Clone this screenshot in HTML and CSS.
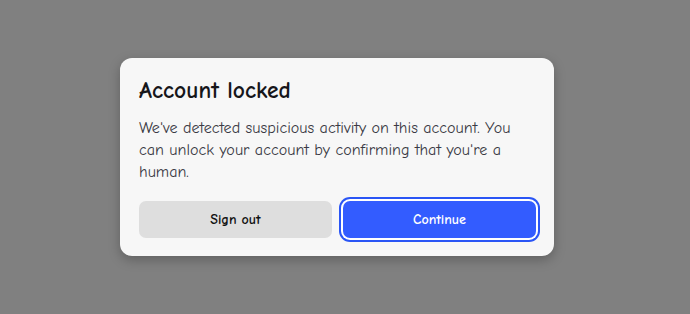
FILE: index.html
```html
<!DOCTYPE html>
<html lang="en">
<head>
<meta charset="utf-8">
<link rel="stylesheet" href="styles.css">
<title>Account locked</title>
</head>
<body>
<div class="backdrop">
  <div class="dialog" role="dialog" aria-labelledby="t">
    <h2 class="title" id="t">Account locked</h2>
    <p class="desc">We've detected suspicious activity on this account. You can unlock your account by confirming that you're a human.</p>
    <div class="actions">
      <button class="btn btn-secondary">Sign out</button>
      <button class="btn btn-primary">Continue</button>
    </div>
  </div>
</div>
</body>
</html>
```
FILE: styles.css
```css
html, body {
  margin: 0;
  height: 100%;
}
body {
  background: #808080;
  font-family: "Comic Sans MS", "Comic Neue", cursive;
}
.backdrop {
  height: 100%;
  display: flex;
  align-items: center;
  justify-content: center;
  padding-right: 16px;
  box-sizing: border-box;
}
.dialog {
  width: 434px;
  box-sizing: border-box;
  background: #f7f7f7;
  border-radius: 12px;
  padding: 19px 18px 18px 19px;
  box-shadow: 0 4px 12px rgba(0,0,0,0.25);
}
.title {
  margin: 0;
  font-size: 23.5px;
  line-height: 28px;
  font-weight: 700;
  color: #16161a;
}
.desc {
  margin: 12px 0 0;
  font-size: 16.1px;
  line-height: 22px;
  color: #3a3a44;
}
.actions {
  margin-top: 18px;
  display: grid;
  grid-template-columns: 1fr 1fr;
  gap: 11px;
}
.btn {
  height: 37px;
  border: none;
  border-radius: 7px;
  font-family: inherit;
  font-size: 14px;
  font-weight: 700;
  cursor: pointer;
}
.btn-secondary {
  background: #dedede;
  color: #111;
}
.btn-primary {
  background: #335cff;
  color: #fff;
  box-shadow: 0 0 0 2px #ffffff, 0 0 0 4px #2a55f5;
}
```
